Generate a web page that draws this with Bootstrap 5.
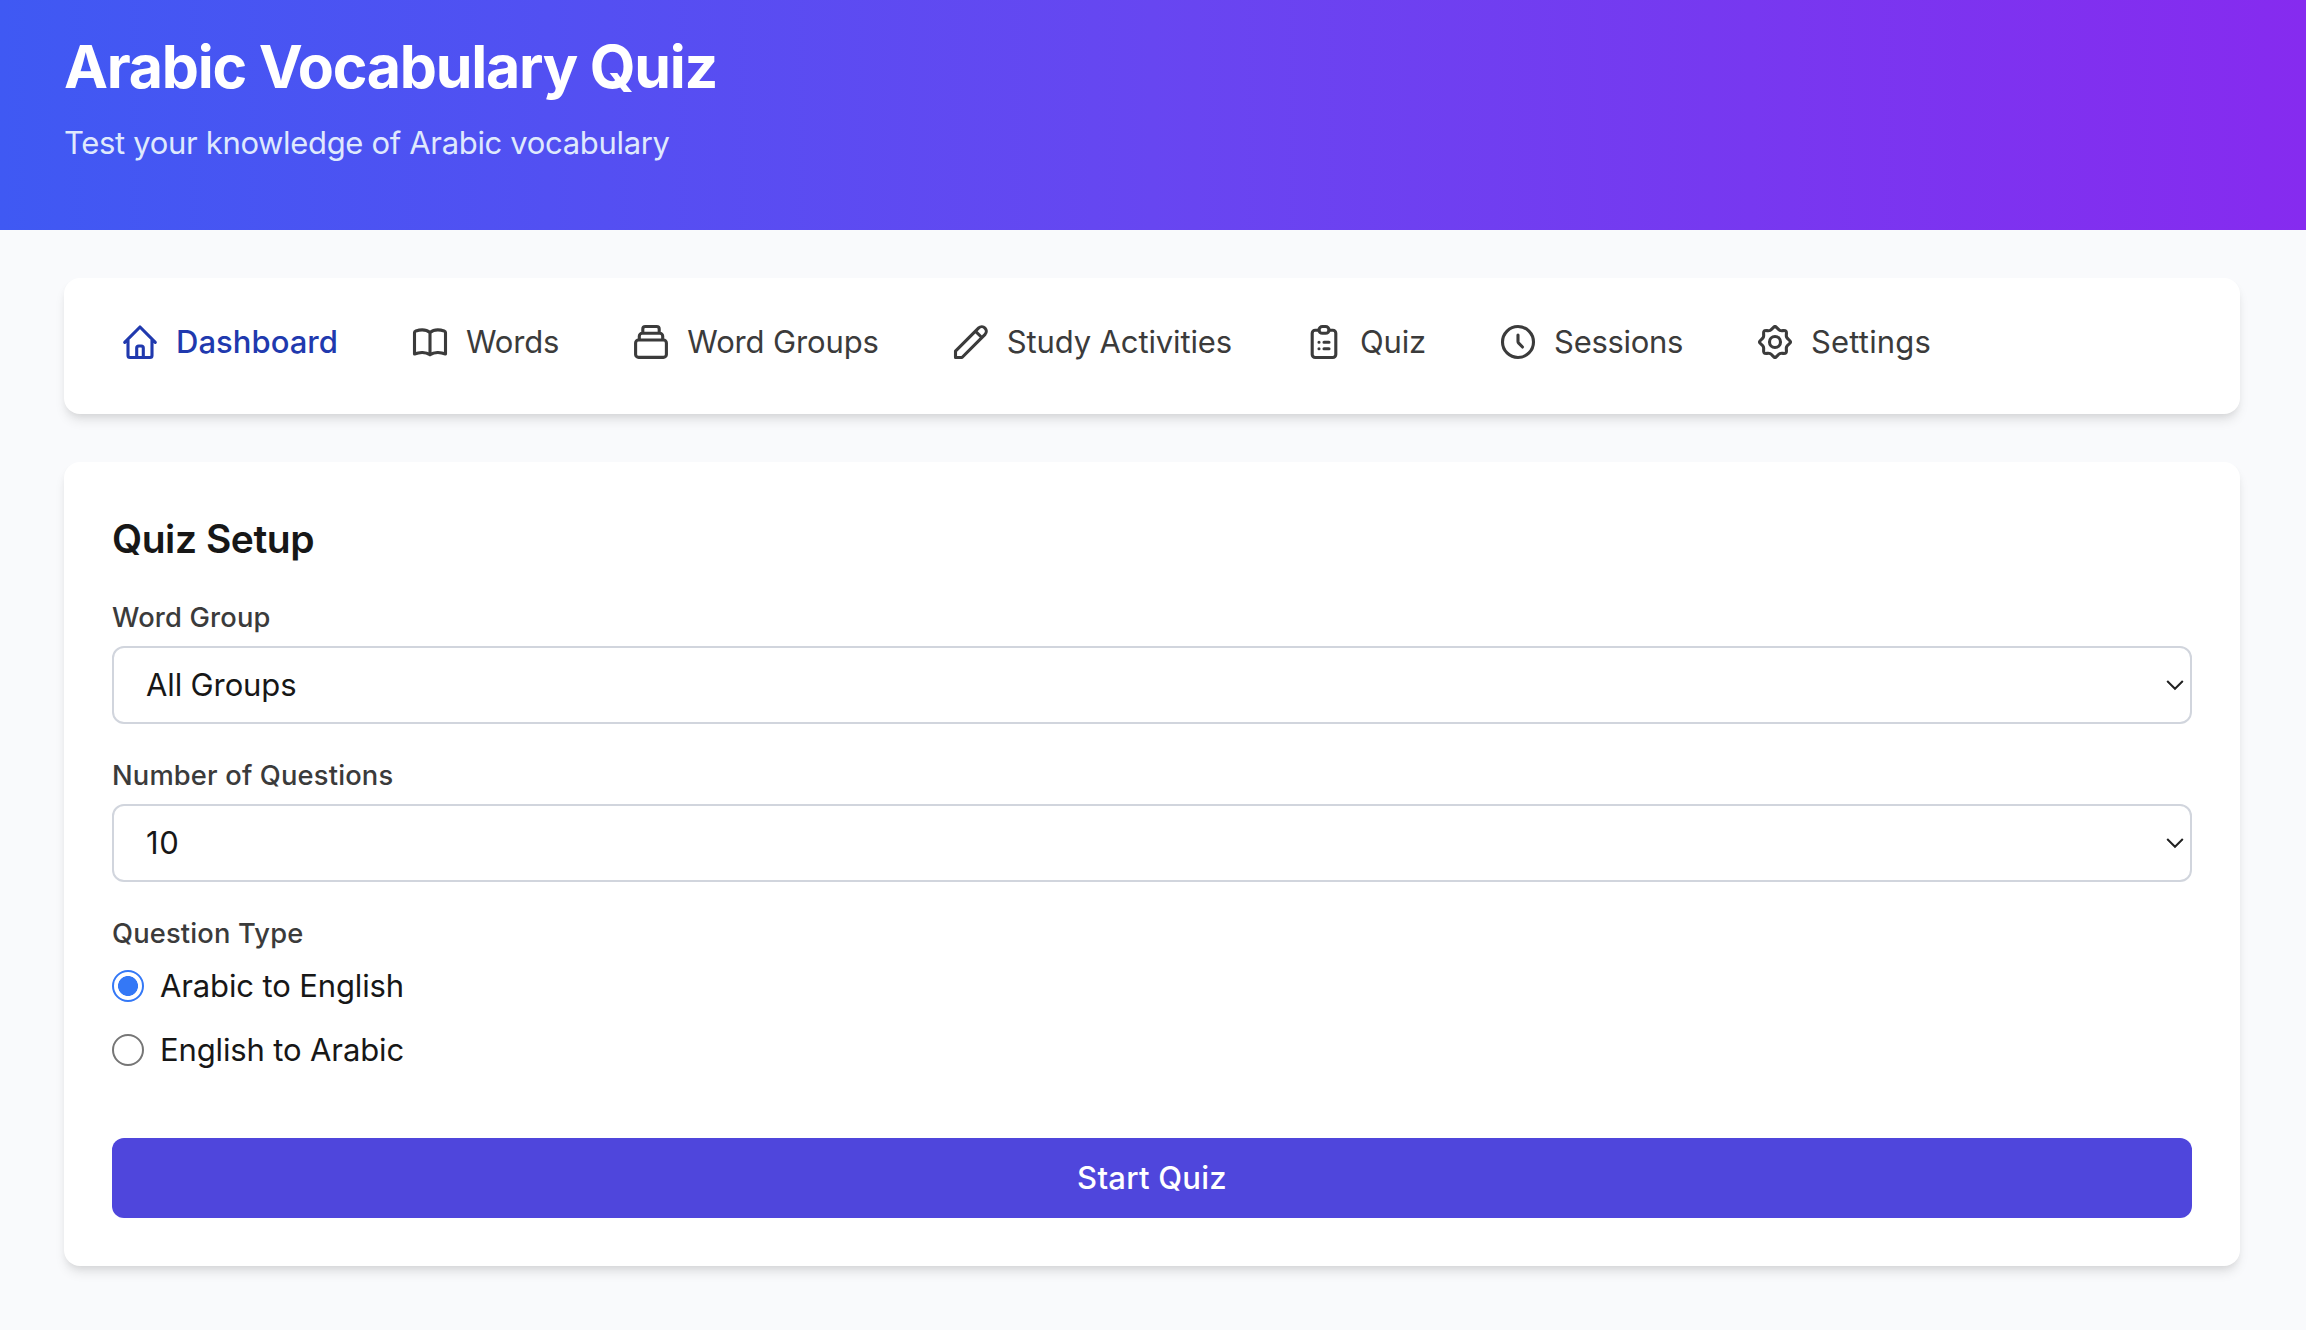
<!DOCTYPE html>
<html lang="en">
<head>
<meta charset="utf-8">
<title>Arabic Vocabulary Quiz</title>
<link href="https://cdn.jsdelivr.net/npm/bootstrap@5.3.0/dist/css/bootstrap.min.css" rel="stylesheet">
<style>
body{background:#f9fafc;font-family:Inter,"Liberation Sans",sans-serif;color:#171717;font-size:31px;line-height:48px}
.hero{height:230px;padding:32px 64px 0;background:linear-gradient(90deg,#3f59f3,#6746f1 50%,#862bef)}
.hero h1{font-size:59px;font-weight:700;line-height:69px;margin-bottom:18px;letter-spacing:-1.25px}
.hero p{color:#dfe9fd;letter-spacing:-.33px}
.page{padding:48px 66px 48px 64px}
.panel{border-radius:16px;box-shadow:0 8px 12px -2px rgba(0,0,0,.1),0 4px 8px -4px rgba(0,0,0,.1)}
.tabs{height:136px;padding:40px 56px 48px;gap:72px}
.tabs a{color:#3b3b3b;gap:16px;text-decoration:none;white-space:nowrap;letter-spacing:-.14px}
.tabs a.active{color:#2039ae;font-weight:500;letter-spacing:.03px}
.tabs a.snug{letter-spacing:-.31px}
.tabs a.airy{letter-spacing:.16px}
.tabs svg{width:40px;height:40px;fill:none;stroke:currentColor;stroke-width:3.1;stroke-linecap:round;stroke-linejoin:round;flex:none}
.setup{margin-top:48px;padding:48px}
.setup h2{font-size:39px;font-weight:600;line-height:58px;margin:0 0 30px;letter-spacing:-.45px}
.field-label{display:block;font-size:27.3px;font-weight:500;line-height:40px;color:#3b3b3b;margin-bottom:8px;letter-spacing:.17px}
.form-select{height:78px;border:2px solid #d1d5dd;border-radius:12px;font-size:31px;line-height:48px;color:#171717;padding:13px 48px 13px 32px;margin-bottom:32px;letter-spacing:-.13px;background:#fff url("data:image/svg+xml,%3Csvg xmlns='http://www.w3.org/2000/svg' viewBox='0 0 18 12'%3E%3Cpath d='M1.2 2l7.8 7.8L16.8 2' fill='none' stroke='%23222' stroke-width='2'/%3E%3C/svg%3E") no-repeat right 6px center/18px 12px}
#count{letter-spacing:.7px}
.choice{display:flex;align-items:center;gap:16px;height:48px;letter-spacing:-.13px}
.choice+.choice{margin-top:16px}
.choice .form-check-input{width:32px;height:32px;margin:0;border:2px solid #767676;flex:none}
.choice .form-check-input:checked{background:#fff radial-gradient(circle,#3478f6 9.6px,transparent 10.3px) center/100% 100%;background-origin:border-box;border-color:#3478f6}
.start{display:block;height:80px;margin-top:64px;border:0;border-radius:12px;background:#4f46dc;color:#fff;font-size:31px;font-weight:500;line-height:48px;letter-spacing:.25px}
</style>
</head>
<body>
<header class="hero text-white">
<h1>Arabic Vocabulary Quiz</h1>
<p class="mb-0">Test your knowledge of Arabic vocabulary</p>
</header>
<main class="page">
<nav class="panel tabs bg-white d-flex">
<a href="#" class="active d-flex align-items-center"><svg viewBox="0 0 40 40"><path d="M4.7 20.4 20 5l15.3 15.4M8 18v15.5a2 2 0 0 0 2 2h20a2 2 0 0 0 2-2V18M16.7 35v-9a2 2 0 0 1 2-2h2.6a2 2 0 0 1 2 2v9"/></svg><span>Dashboard</span></a>
<a href="#" class="d-flex align-items-center"><svg viewBox="0 0 40 40"><path d="M20 10.5C16.5 7.6 11 7.4 5.8 8.9 4.9 9.2 4.5 9.7 4.5 10.6V32c5-2 11.5-2 15.5.8C24 30 30.5 30 35.5 32V10.6c0-.9-.4-1.4-1.3-1.7C29 7.4 23.5 7.6 20 10.5V32.5"/></svg><span>Words</span></a>
<a href="#" class="d-flex align-items-center"><svg viewBox="0 0 40 40"><rect x="4.6" y="18" width="30.8" height="17.4" rx="3"/><path d="M8.3 17.5v-3.2a3 3 0 0 1 3-3h17.4a3 3 0 0 1 3 3v3.2M11.8 11V7a2.5 2.5 0 0 1 2.5-2.5h11.4a2.5 2.5 0 0 1 2.5 2.5v4"/></svg><span>Word Groups</span></a>
<a href="#" class="d-flex align-items-center"><svg viewBox="0 0 40 40"><path d="M4.5 35.5v-6.3L27.7 5.9a4.53 4.53 0 0 1 6.4 6.4L11 35.5zM24.6 9.3l6.2 6.2"/></svg><span>Study Activities</span></a>
<a href="#" class="d-flex align-items-center"><svg viewBox="0 0 40 40"><path d="M15 8.2h-3.8a3 3 0 0 0-3 3v21.300a3 3 0 0 0 3 3h17.600a3 3 0 0 0 3-3V11.200a3 3 0 0 0-3-3H25M15 20.300h.01M20 20.300h5M15 26.700h.01M20 26.700h5"/><rect x="15" y="4.5" width="10" height="6.8" rx="3.4"/></svg><span>Quiz</span></a>
<a href="#" class="snug d-flex align-items-center"><svg viewBox="0 0 40 40"><circle cx="20" cy="20" r="15.5"/><path d="M20 13v6.4q0 1.1.7 1.8L24.5 25"/></svg><span>Sessions</span></a>
<a href="#" class="airy d-flex align-items-center"><svg viewBox="0 0 40 40"><g id="cogq"><path id="cog" d="M20 4.6C21.8 4.6 22.6 7.5 24.8 8.4 27 9.3 29.6 7.8 30.9 9.1 32.2 10.4 30.7 13 31.6 15.2 32.5 17.4 35.4 18.2 35.4 20"/><use href="#cog" transform="rotate(90 20 20)"/></g><use href="#cogq" transform="rotate(180 20 20)"/><circle cx="20" cy="20" r="5.5"/></svg><span>Settings</span></a>
</nav>
<section class="panel setup bg-white">
<h2>Quiz Setup</h2>
<label class="field-label" for="group">Word Group</label>
<select class="form-select" id="group"><option>All Groups</option></select>
<label class="field-label" for="count">Number of Questions</label>
<select class="form-select" id="count"><option>10</option></select>
<span class="field-label">Question Type</span>
<label class="choice"><input class="form-check-input" type="radio" name="kind" checked><span>Arabic to English</span></label>
<label class="choice"><input class="form-check-input" type="radio" name="kind"><span>English to Arabic</span></label>
<button class="btn start w-100">Start Quiz</button>
</section>
</main>
<script src="https://cdn.jsdelivr.net/npm/bootstrap@5.3.0/dist/js/bootstrap.bundle.min.js"></script>
</body>
</html>
